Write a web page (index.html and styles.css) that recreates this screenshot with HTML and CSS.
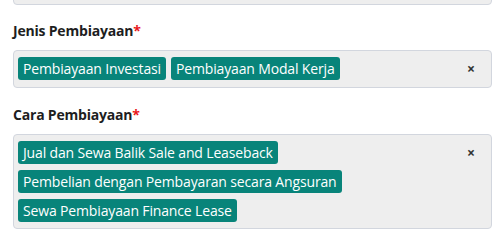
FILE: index.html
```html
<!DOCTYPE html>
<html lang="id">
<head>
    <meta charset="UTF-8">
    <meta name="viewport" content="width=device-width, initial-scale=1.0">
    <title>Pembiayaan</title>
    <link rel="stylesheet" href="styles.css">
</head>
<body>
    <div class="form">
        <div class="select prev"></div>

        <div class="field">
            <label>Jenis Pembiayaan<span class="req">*</span></label>
            <div class="select">
                <div class="chips">
                    <span class="chip">Pembiayaan Investasi</span>
                    <span class="chip">Pembiayaan Modal Kerja</span>
                </div>
                <span class="clear">×</span>
            </div>
        </div>

        <div class="field">
            <label>Cara Pembiayaan<span class="req">*</span></label>
            <div class="select">
                <div class="chips">
                    <span class="chip">Jual dan Sewa Balik Sale and Leaseback</span>
                    <span class="chip">Pembelian dengan Pembayaran secara Angsuran</span>
                    <span class="chip">Sewa Pembiayaan Finance Lease</span>
                </div>
                <span class="clear">×</span>
            </div>
        </div>
    </div>
</body>
</html>
```

FILE: styles.css
```css
body {
    margin: 0;
    background: #fff;
    font-family: "Open Sans", sans-serif;
    color: #1e1e1e;
}

.form {
    padding: 0 8px 0 13px;
}

.select {
    display: flex;
    align-items: flex-start;
    background: #eee;
    border: 1px solid #d2d6de;
    border-radius: 4px;
    padding: 6px 0 6px 4px;
    min-height: 38px;
    box-sizing: border-box;
}

.prev {
    height: 37px;
    margin-top: -33px;
}

.field {
    margin-top: 16px;
}

.field + .field {
    margin-top: 17px;
}

label {
    display: block;
    font-size: 14px;
    font-weight: bold;
    letter-spacing: -0.2px;
    line-height: 20px;
    margin-bottom: 9px;
}

.req {
    color: #e8161b;
}

.chips {
    flex: 1;
    display: flex;
    flex-wrap: wrap;
    align-items: flex-start;
    gap: 6px 5px;
}

.chip {
    background: #08847a;
    color: #fff;
    font-size: 14px;
    letter-spacing: -0.15px;
    line-height: 23px;
    padding: 0 5px;
    border-radius: 3px;
    white-space: nowrap;
}

.clear {
    font-size: 14px;
    font-weight: bold;
    line-height: 23px;
    width: 12px;
    text-align: center;
    margin-right: 14px;
    color: #333;
}
```
